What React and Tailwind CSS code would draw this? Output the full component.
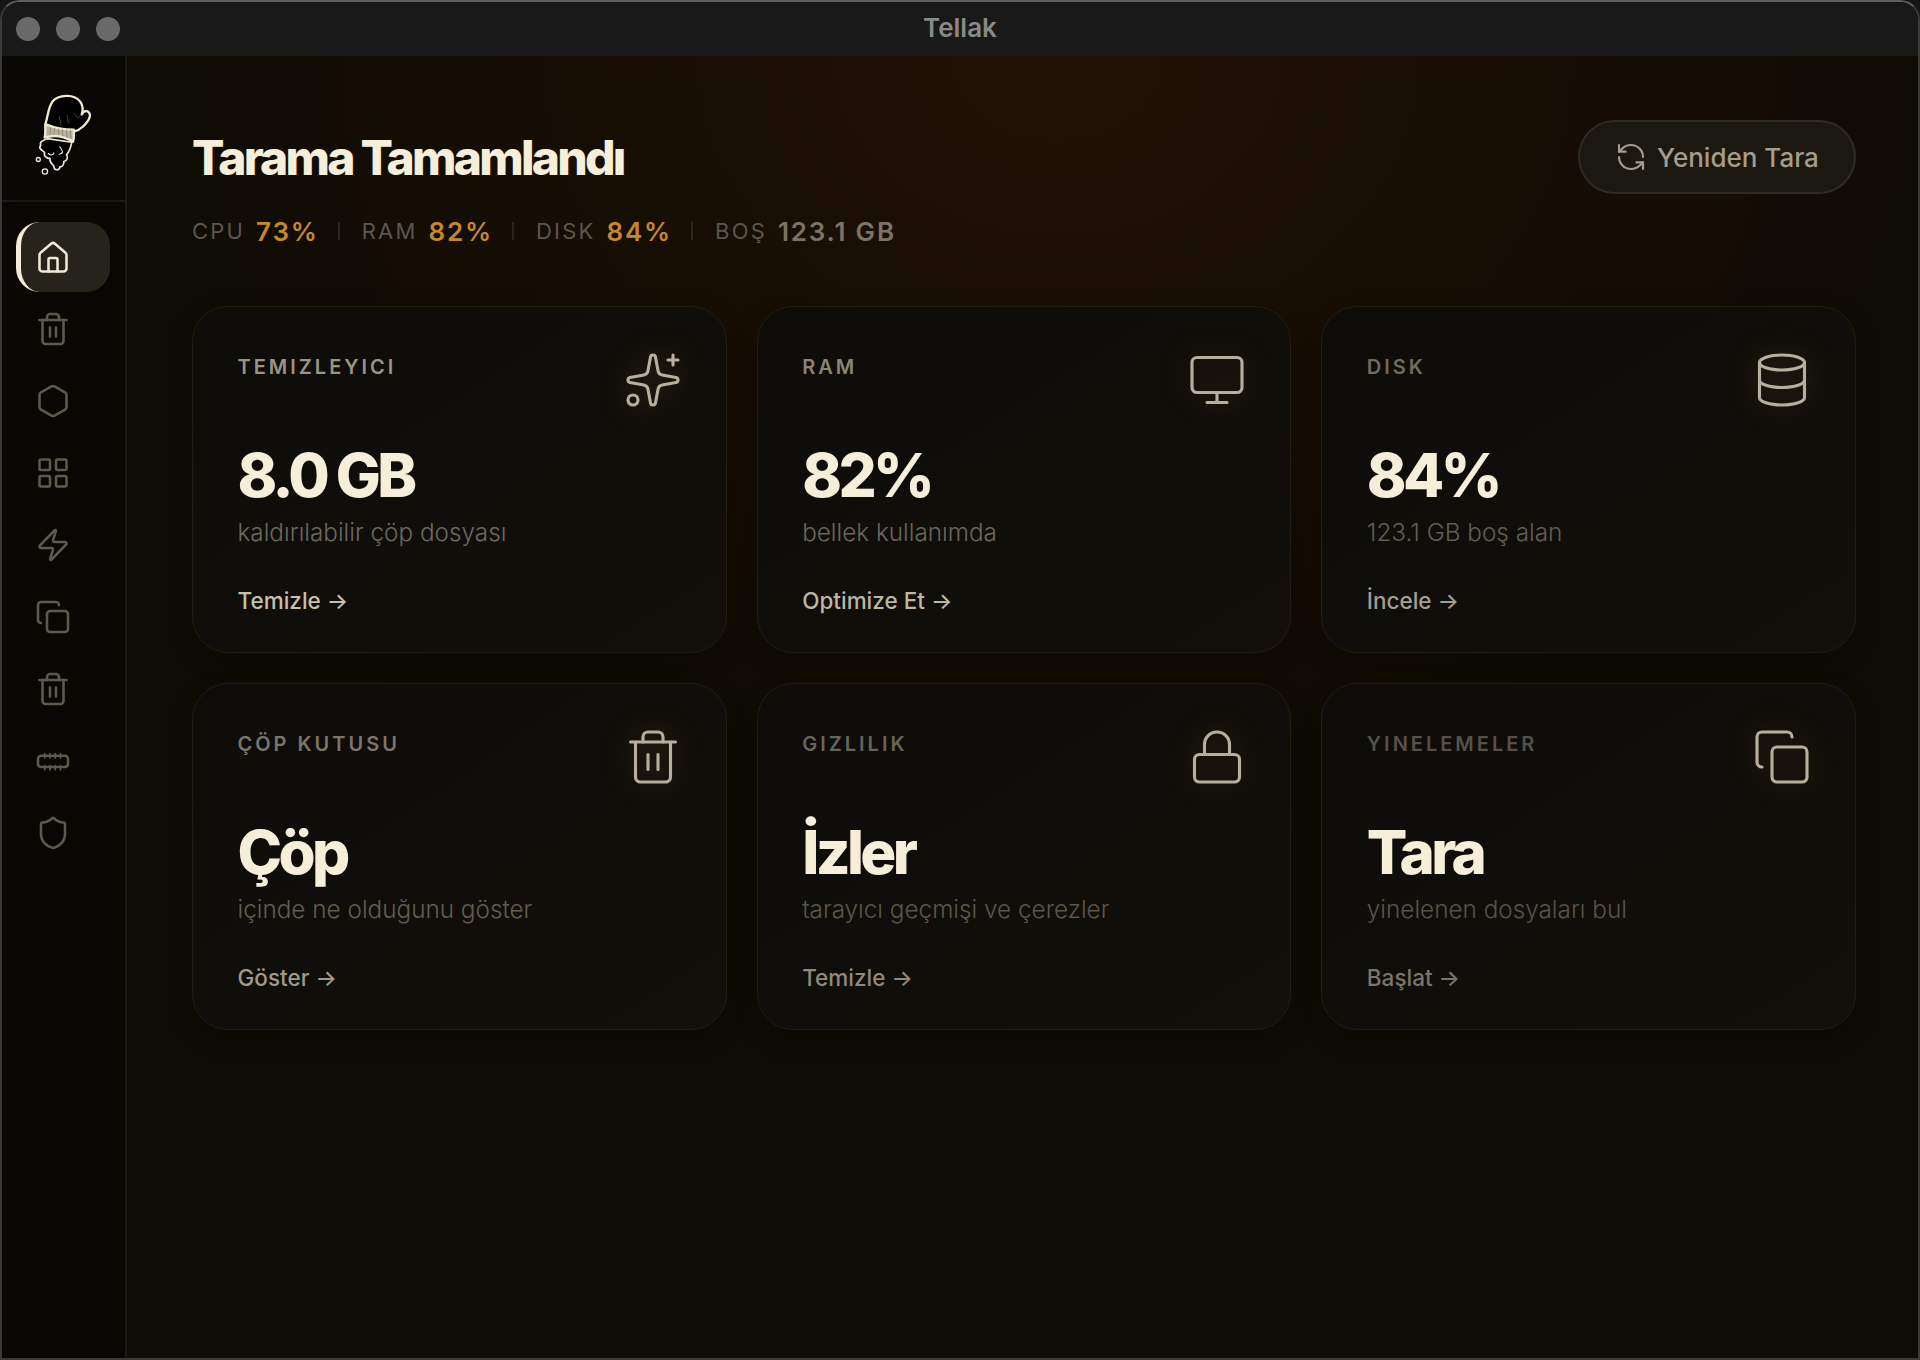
import React from "react";
import { House, Trash2, Hexagon, LayoutGrid, Zap, Copy, Shield, Sparkles, Monitor, Database, Lock, RefreshCcw } from "lucide-react";

function Logo() {
  return (
    <svg viewBox="100 275 175 255" className="w-[58px] h-[85px]" fill="none" stroke="#efe8d2" strokeWidth="7" strokeLinejoin="round" strokeLinecap="round">
      <path d="M140 415 C128 420 116 424 120 436 C112 444 126 452 132 456 C128 468 140 476 148 474 C146 488 156 492 160 498 C160 510 176 514 178 500 C186 502 192 490 190 484 C200 482 204 470 198 464 C208 452 212 436 214 426 Z" fill="#000000" strokeWidth="5" />
      <circle cx="113" cy="478" r="6" fill="#000000" strokeWidth="4" />
      <circle cx="133" cy="514" r="8" fill="#000000" strokeWidth="4" />
      <path d="M143 460 C150 466 156 466 160 458 M178 440 C186 452 192 458 176 462" strokeWidth="3.5" />
      <path d="M134 372 C142 350 142 322 156 303 C172 282 222 278 240 304 C248 316 248 330 244 342 C250 330 262 328 268 340 C272 352 258 370 246 380 C238 388 228 392 220 394 L220 400 L135 382 Z" fill="#000000" />
      <path d="M222 340 C226 350 232 356 240 346 M176 350 L182 372 M200 345 L204 368" stroke="#4a463c" strokeWidth="3" />
      <path d="M136 372 C160 382 195 388 220 388 C220 400 222 410 218 424 C190 408 160 402 132 412 C136 400 132 385 136 372 Z" fill="#b8b19d" strokeWidth="7" />
      <path d="M150 382 L148 402 M162 384 L161 402 M174 386 L174 403 M186 388 L187 407 M198 389 L200 412 M209 390 L211 415" stroke="#8d8778" strokeWidth="2.5" />
    </svg>
  );
}

function ChipIcon() {
  return (
    <svg viewBox="0 0 24 24" className="w-[36px] h-[36px]" fill="none" stroke="currentColor" strokeWidth="1.7" strokeLinecap="round" strokeLinejoin="round">
      <rect x="2" y="8.5" width="20" height="7.5" rx="2" />
      <path d="M6.5 7v3 M10 7v3 M13.5 7v3 M17 7v3 M6.5 15v3 M10 15v3 M13.5 15v3 M17 15v3" strokeWidth="1.1" />
    </svg>
  );
}

const navIcons = [Trash2, Hexagon, LayoutGrid, Zap, Copy, Trash2, ChipIcon, Shield];

const stats = [
  { label: "CPU", value: "73%", amber: true },
  { label: "RAM", value: "82%", amber: true },
  { label: "DISK", value: "84%", amber: true },
  { label: "BOŞ", value: "123.1 GB", amber: false },
];

const cards = [
  { label: "TEMIZLEYICI", value: "8.0 GB", sub: "kaldırılabilir çöp dosyası", action: "Temizle", Icon: Sparkles, lc: "text-[#9a9484]", sc: "text-[#6d685c]", ac: "text-[#c6c0ad]" },
  { label: "RAM", value: "82%", sub: "bellek kullanımda", action: "Optimize Et", Icon: Monitor, lc: "text-[#8a8475]", sc: "text-[#6b665a]", ac: "text-[#bcb6a3]" },
  { label: "DISK", value: "84%", sub: "123.1 GB boş alan", action: "İncele", Icon: Database, lc: "text-[#706b5e]", sc: "text-[#625d52]", ac: "text-[#a59f8e]" },
  { label: "ÇÖP KUTUSU", value: "Çöp", sub: "içinde ne olduğunu göster", action: "Göster", Icon: Trash2, lc: "text-[#7a7567]", sc: "text-[#625d52]", ac: "text-[#a09a89]" },
  { label: "GIZLILIK", value: "İzler", sub: "tarayıcı geçmişi ve çerezler", action: "Temizle", Icon: Lock, lc: "text-[#69645a]", sc: "text-[#5a564b]", ac: "text-[#8f8a7a]" },
  { label: "YINELEMELER", value: "Tara", sub: "yinelenen dosyaları bul", action: "Başlat", Icon: Copy, lc: "text-[#55514a]", sc: "text-[#57534a]", ac: "text-[#7b7668]" },
];

function Card({ label, value, sub, action, Icon, lc, sc, ac }) {
  return (
    <div className="h-[347px] rounded-[36px] border border-[#1f1c15] bg-gradient-to-br from-[#0d0c09] to-[#120f09] pl-[44.5px] pr-[43px] shadow-[0_8px_24px_rgba(0,0,0,0.25)]">
      <div className="flex items-start justify-between pt-[43px] h-[104px]">
        <div className={`text-[20px] leading-[28px] mt-[3px] font-semibold tracking-[0.15em] ${lc}`}>{label}</div>
        <Icon className="w-[60px] h-[60px] text-[#b6af9c] drop-shadow-[0_0_14px_rgba(190,140,60,0.28)]" strokeWidth={1.25} />
      </div>
      <div className="mt-[29px] text-[60px] leading-[70px] font-extrabold tracking-[-0.06em] text-[#f5eed8]">{value}</div>
      <div className={`mt-[6px] text-[24.3px] leading-[32px] font-light ${sc}`}>{sub}</div>
      <div className={`mt-[37px] flex items-center gap-[6px] text-[22.5px] leading-[32px] font-medium ${ac}`}>
        <span>{action}</span>
        <span>→</span>
      </div>
    </div>
  );
}

export default function App() {
  return (
    <div className="w-[1920px] h-[1360px] bg-[#161616] font-['Inter','Noto_Sans',sans-serif]">
      <div className="h-full flex flex-col overflow-hidden rounded-t-[20px] border-x-2 border-t-2 border-b-2 border-x-[#3b3a37] border-t-[#5f5f5f] border-b-[#3b3a37] bg-[#0f0c03]">
        <header className="h-[54px] shrink-0 grid grid-cols-3 items-center bg-[#19191a]">
          <div className="flex gap-[16px] pl-[14px]">
            <span className="w-[24px] h-[24px] rounded-full bg-[#6a6a6a]" />
            <span className="w-[24px] h-[24px] rounded-full bg-[#6a6a6a]" />
            <span className="w-[24px] h-[24px] rounded-full bg-[#6a6a6a]" />
          </div>
          <div className="text-center text-[26px] leading-[32px] pb-[2px] font-semibold text-[#8a8a88]">Tellak</div>
          <div />
        </header>
        <div className="flex-1 flex min-h-0">
          <aside className="w-[125px] shrink-0 bg-[#090703] border-r-2 border-[#1b1912] flex flex-col">
            <div className="h-[146px] shrink-0 border-b-2 border-[#1b1912] flex items-center justify-center pr-[2px] pt-[12px]">
              <Logo />
            </div>
            <nav className="flex flex-col gap-[2px] pl-[14px] pt-[20px]">
              <div className="w-[94px] h-[70px] rounded-[24px] border-l-[5px] border-[#f3ecd6] bg-[#26231b] flex items-center pl-[14px] pt-[2px]">
                <House className="w-[36px] h-[36px] text-[#efe8d2]" strokeWidth={1.7} />
              </div>
              {navIcons.map((I, i) => (
                <div key={i} className="w-[94px] h-[70px] flex items-center pl-[19px] text-[#5e594c]">
                  <I className="w-[36px] h-[36px]" strokeWidth={1.7} />
                </div>
              ))}
            </nav>
          </aside>
          <main className="flex-1 min-w-0 pl-[65px] pr-[62px] pt-[64px] bg-[radial-gradient(ellipse_900px_720px_at_52%_0%,#211104_0%,#180e03_42%,#0f0c03_100%)]">
            <div className="flex items-start justify-between h-[126px]">
              <div>
                <h1 className="text-[48px] leading-[75px] font-extrabold tracking-[-0.058em] text-[#f5eed8]">Tarama Tamamlandı</h1>
                <div className="mt-[21px] flex items-center h-[30px]">
                  {stats.map((s, i) => (
                    <React.Fragment key={s.label}>
                      {i > 0 && <span className="ml-[19px] mr-[22px] w-[2px] h-[18px] bg-[#2a261d]" />}
                      <span className="text-[22px] tracking-[0.1em] text-[#5b564a]">{s.label}</span>
                      <span className={`ml-[11px] text-[26px] tracking-[0.07em] font-semibold ${s.amber ? "text-[#c5882a]" : "text-[#7a7466]"}`}>{s.value}</span>
                    </React.Fragment>
                  ))}
                </div>
              </div>
              <button className="w-[278px] h-[74px] rounded-full border-2 border-[#2f2b22] bg-[#1b1810] flex items-center justify-center gap-[10px] text-[#a39d8b] text-[26px] font-medium">
                <RefreshCcw className="w-[32px] h-[32px]" strokeWidth={1.6} />
                <span>Yeniden Tara</span>
              </button>
            </div>
            <div className="mt-[60px] grid grid-cols-3 gap-[30px]">
              {cards.map((c) => (
                <Card key={c.label} {...c} />
              ))}
            </div>
          </main>
        </div>
      </div>
    </div>
  );
}
